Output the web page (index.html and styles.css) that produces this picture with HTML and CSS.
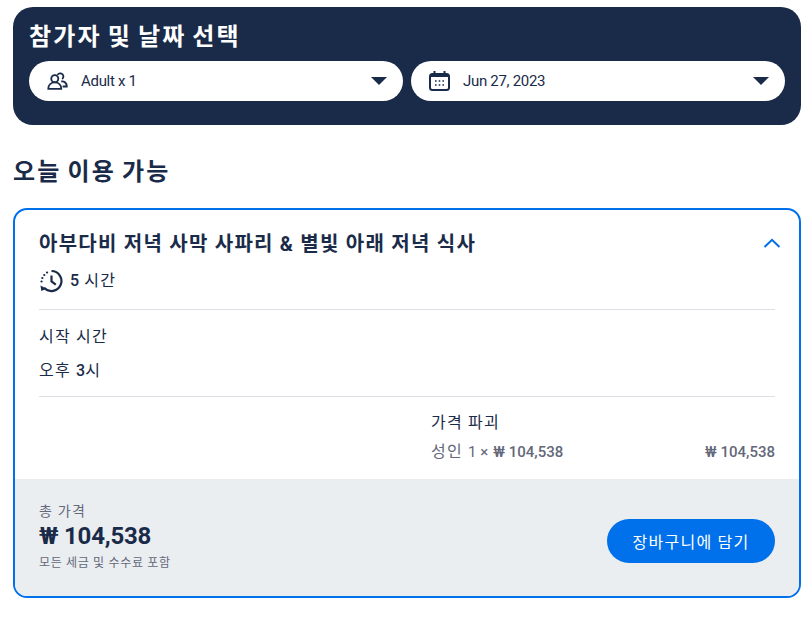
FILE: index.html
```html
<!DOCTYPE html>
<html lang="ko">
<head>
	<meta charset="UTF-8">
	<title>참가자 및 날짜 선택</title>
	<link rel="stylesheet" href="styles.css">
</head>
<body>
	<div class="picker">
		<h2 class="pickerTitle">참가자 및 날짜 선택</h2>
		<div class="pickerRow">
			<div class="pill">
				<svg class="pillIcon" width="24" height="24" viewBox="0 0 26 26" fill="none" stroke="#1a2b49" stroke-width="2">
					<circle cx="9.500" cy="10.500" r="3.800"/>
					<path d="M2.500 21.500c0-4.500 3-7 7-7s7 2.500 7 7z"/>
					<path d="M12.500 6.400a3.400 3.400 0 1 1 5 4.400"/>
					<path d="M16.500 13.500c3.500-.5 6 1.800 6 5.500h-4.500"/>
				</svg>
				<span class="pillText">Adult x 1</span>
				<span class="caret"></span>
			</div>
			<div class="pill">
				<svg class="pillIcon" width="24" height="24" viewBox="0 0 24 24" fill="none" stroke="#1a2b49" stroke-width="2">
					<rect x="2" y="5" width="19" height="16" rx="2.500"/>
					<path d="M6.500 2v5M16.500 2v5M2 7h19"/>
					<path d="M7 12h1.600M10.700 12h1.600M14.400 12h1.600M7 16h1.600M10.700 16h1.600M14.400 16h1.600" stroke-width="1.600"/>
				</svg>
				<span class="pillText">Jun 27, 2023</span>
				<span class="caret"></span>
			</div>
		</div>
	</div>

	<h2 class="sectionTitle">오늘 이용 가능</h2>

	<div class="card">
		<div class="cardBody">
			<div class="cardHead">
				<h3 class="cardTitle">아부다비 저녁 사막 사파리 &amp; 별빛 아래 저녁 식사</h3>
				<svg class="chevron" width="18" height="10" viewBox="0 0 18 10" fill="none" stroke="#0071eb" stroke-width="2">
					<path d="M1.500 9L9 1.800 16.500 9"/>
				</svg>
			</div>
			<div class="duration">
				<svg width="24" height="24" viewBox="0 0 24 24" fill="none" stroke="#1a2b49" stroke-width="2.200">
					<path d="M12.500 2a10 10 0 1 1-7.400 16.800"/>
					<path d="M12.500 6.500v6l4.300 3.200"/>
					<path d="M1.500 16.500l.8 5.500 5.200-2.200z" fill="#1a2b49" stroke="none"/>
					<path d="M2.500 12.500h.1M3.300 9h.1M5.200 6h.1M8 3.500h.1" stroke-linecap="round"/>
				</svg>
				<span><b class="num">5</b> 시간</span>
			</div>
			<div class="block">
				<p class="startLabel">시작 시간</p>
				<p class="startValue">오후 <span class="num">3</span>시</p>
			</div>
			<div class="price">
				<p class="priceTitle">가격 파괴</p>
				<div class="priceLine">
					<span>성인 <span class="qty">1 ×</span> <span class="amount">₩ 104,538</span></span>
					<span class="amount">₩ 104,538</span>
				</div>
			</div>
		</div>
		<div class="cardFoot">
			<div class="total">
				<p class="totalLabel">총 가격</p>
				<p class="totalValue">₩ 104,538</p>
				<p class="totalNote">모든 세금 및 수수료 포함</p>
			</div>
			<a class="cartBtn">장바구니에 담기</a>
		</div>
	</div>
</body>
</html>
```

FILE: styles.css
```css
*{
	margin: 0;
	padding: 0;
	box-sizing: border-box;
}
body{
	padding: 7px 11px 0 13px;
	font-family: "Roboto", "Noto Sans CJK KR", sans-serif;
	letter-spacing: .08em;
	word-spacing: -.01em;
	color: #1a2b49;
	background-color: #fff;
}
.picker{
	height: 118px;
	padding: 15px 16px 0;
	background-color: #1a2b49;
	border-radius: 20px;
}
.pickerTitle{
	height: 39px;
	font-size: 24px;
	line-height: 30px;
	font-weight: 700;
	letter-spacing: .09em;
	word-spacing: -.09em;
	color: #fff;
}
.pickerRow{
	display: flex;
	gap: 8px;
}
.pill{
	flex: 1;
	height: 40px;
	display: flex;
	align-items: center;
	padding: 0 16px 0 17px;
	background-color: #fff;
	border-radius: 20px;
}
.pillIcon{
	flex: none;
}
.pillText{
	flex: 1;
	margin-left: 11px;
	font-size: 15px;
	letter-spacing: -.3px;
	word-spacing: 0;
}
.caret{
	width: 0;
	height: 0;
	border-left: 8px solid transparent;
	border-right: 8px solid transparent;
	border-top: 8px solid #1a2b49;
}
.sectionTitle{
	margin-top: 30px;
	font-size: 24px;
	line-height: 34px;
	font-weight: 700;
	letter-spacing: .09em;
	word-spacing: -.09em;
}
.card{
	margin-top: 19px;
	height: 390px;
	border: 2px solid #0071eb;
	border-radius: 14px;
	overflow: hidden;
	display: flex;
	flex-direction: column;
}
.cardBody{
	flex: 1;
	padding: 20px 24px 0;
}
.cardHead{
	display: flex;
	justify-content: space-between;
	align-items: center;
}
.cardTitle{
	font-size: 20px;
	line-height: 28px;
	font-weight: 700;
}
.chevron{
	margin: 0 -6px 2px 0;
}
.duration{
	margin-top: 10px;
	height: 42px;
	padding-top: 1px;
	display: flex;
	align-items: flex-start;
	gap: 7px;
	font-size: 16px;
	line-height: 24px;
	border-bottom: 1px solid #dcdfe4;
}
.num{
	font-weight: 500;
	letter-spacing: 0;
}
.block{
	height: 87px;
	padding-top: 15px;
	font-size: 16px;
	line-height: 24px;
	border-bottom: 1px solid #dcdfe4;
}
.startValue{
	margin-top: 10px;
}
.price{
	margin-left: 392px;
	padding-top: 14px;
	font-size: 16px;
	line-height: 24px;
}
.priceLine{
	margin-top: 5px;
	display: flex;
	justify-content: space-between;
	color: #63687a;
}
.qty{
	font-size: 15px;
	letter-spacing: 0;
	word-spacing: 0;
}
.amount{
	font-size: 15px;
	font-weight: 500;
	letter-spacing: 0;
	word-spacing: 0;
}
.cardFoot{
	height: 117px;
	display: flex;
	justify-content: space-between;
	align-items: flex-end;
	padding: 0 24px 33px;
	background-color: #ebeef1;
}
.total{
	margin-bottom: -8px;
}
.totalLabel{
	margin-bottom: 1px;
	font-size: 14px;
	line-height: 18px;
	color: #63687a;
}
.totalValue{
	font-size: 24px;
	line-height: 30px;
	font-weight: 700;
	letter-spacing: -.2px;
	word-spacing: 0;
}
.totalNote{
	margin-top: 4px;
	font-size: 12px;
	line-height: 16px;
	letter-spacing: .06em;
	color: #63687a;
}
.cartBtn{
	width: 168px;
	height: 44px;
	display: flex;
	align-items: center;
	justify-content: center;
	font-size: 16px;
	color: #fff;
	background-color: #0071eb;
	border-radius: 22px;
}
```
